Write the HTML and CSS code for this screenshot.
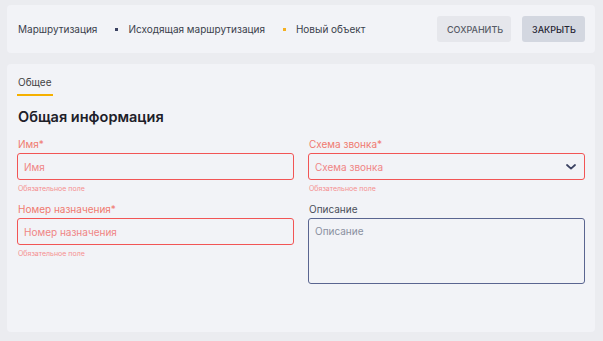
FILE: index.html
```html
<!DOCTYPE html>
<html lang="ru">
<head>
    <meta charset="UTF-8">
    <meta name="viewport" content="width=device-width, initial-scale=1.0">
    <title>Новый объект</title>
    <link rel="stylesheet" href="styles.css">
</head>
<body>

<header class="topbar">
    <nav class="crumbs">
        <span class="crumb">Маршрутизация</span>
        <span class="sep"></span>
        <span class="crumb">Исходящая маршрутизация</span>
        <span class="sep sep-active"></span>
        <span class="crumb">Новый объект</span>
    </nav>
    <div class="actions">
        <button class="btn btn-save">Сохранить</button>
        <button class="btn btn-close">Закрыть</button>
    </div>
</header>

<main class="card">
    <div class="tabs">
        <span class="tab active">Общее</span>
    </div>

    <h2 class="section-title">Общая информация</h2>

    <div class="form-grid">
        <div class="field invalid">
            <label for="name">Имя*</label>
            <input type="text" id="name" placeholder="Имя">
            <div class="hint">Обязательное поле</div>
        </div>

        <div class="field invalid">
            <label for="scheme">Схема звонка*</label>
            <div class="select">
                <span class="select-value">Схема звонка</span>
                <svg class="chevron" width="10" height="6" viewBox="0 0 10 6">
                    <path d="M1 1l4 3.6L9 1" fill="none" stroke="#3b4262" stroke-width="1.8" stroke-linecap="round" stroke-linejoin="round"/>
                </svg>
            </div>
            <div class="hint">Обязательное поле</div>
        </div>

        <div class="field invalid">
            <label for="number">Номер назначения*</label>
            <input type="text" id="number" placeholder="Номер назначения">
            <div class="hint">Обязательное поле</div>
        </div>

        <div class="field">
            <label for="descr">Описание</label>
            <textarea id="descr" placeholder="Описание"></textarea>
        </div>
    </div>
</main>

</body>
</html>
```

FILE: styles.css
```css
body {
    font-family: Inter, "Noto Sans", sans-serif;
    background-color: #ebecf0;
    margin: 0;
    padding: 5px 8px 9px 7px;
    color: #333;
}

.topbar {
    display: flex;
    align-items: center;
    justify-content: space-between;
    height: 48px;
    padding: 0 10px 0 11px;
    background-color: #f2f3f7;
    border-radius: 4px;
}

.crumbs {
    display: flex;
    align-items: center;
    font-size: 10px;
    color: #3a3f4c;
}

.sep {
    width: 3px;
    height: 3px;
    margin: 1px 10px 0 18px;
    background-color: #3b4262;
}

.sep-active {
    background-color: #f5b020;
}

.actions {
    display: flex;
    gap: 11px;
}

.btn {
    height: 26px;
    padding: 0 10px;
    border: none;
    border-radius: 3px;
    font-family: inherit;
    font-size: 9px;
    font-weight: 500;
    text-transform: uppercase;
    cursor: pointer;
}

.btn-save {
    width: 74px;
    background-color: #e6e7ec;
    color: #575b66;
}

.btn-close {
    width: 63px;
    background-color: #d3d7e0;
    color: #1f2330;
}

.card {
    margin-top: 11px;
    height: 258px;
    padding: 10px 10px 0 10px;
    background-color: #f2f3f7;
    border-radius: 4px;
}

.tabs {
    display: flex;
}

.tab {
    padding: 2px 1px 6px 1px;
    font-size: 10px;
    color: #444;
    border-bottom: 2px solid #f5b000;
}

.section-title {
    margin: 12px 0 13px 1px;
    font-size: 14.5px;
    font-weight: 600;
    color: #1d2029;
}

.form-grid {
    display: grid;
    grid-template-columns: 1fr 1fr;
    column-gap: 14px;
    row-gap: 10px;
}

.field label {
    display: block;
    margin: 0 0 3px 1px;
    font-size: 10px;
    color: #4b4f5a;
}

.field input,
.field textarea,
.select {
    box-sizing: border-box;
    width: 100%;
    height: 27px;
    padding: 0 6px;
    border: 1px solid #5a6590;
    border-radius: 3px;
    background-color: transparent;
    font-family: inherit;
    font-size: 10px;
    color: #333;
    outline: none;
}

.field textarea {
    height: 66px;
    padding-top: 6px;
    resize: none;
}

.field textarea::placeholder {
    color: #8a90a0;
}

.select {
    display: flex;
    align-items: center;
    justify-content: space-between;
    padding-right: 8px;
}

.invalid label {
    color: #f07a70;
}

.invalid input,
.invalid .select {
    border-color: #f25555;
}

.invalid input::placeholder,
.select-value {
    color: #f08585;
}

.hint {
    margin: 4px 0 0 1px;
    font-size: 7px;
    color: #f59090;
}
```
